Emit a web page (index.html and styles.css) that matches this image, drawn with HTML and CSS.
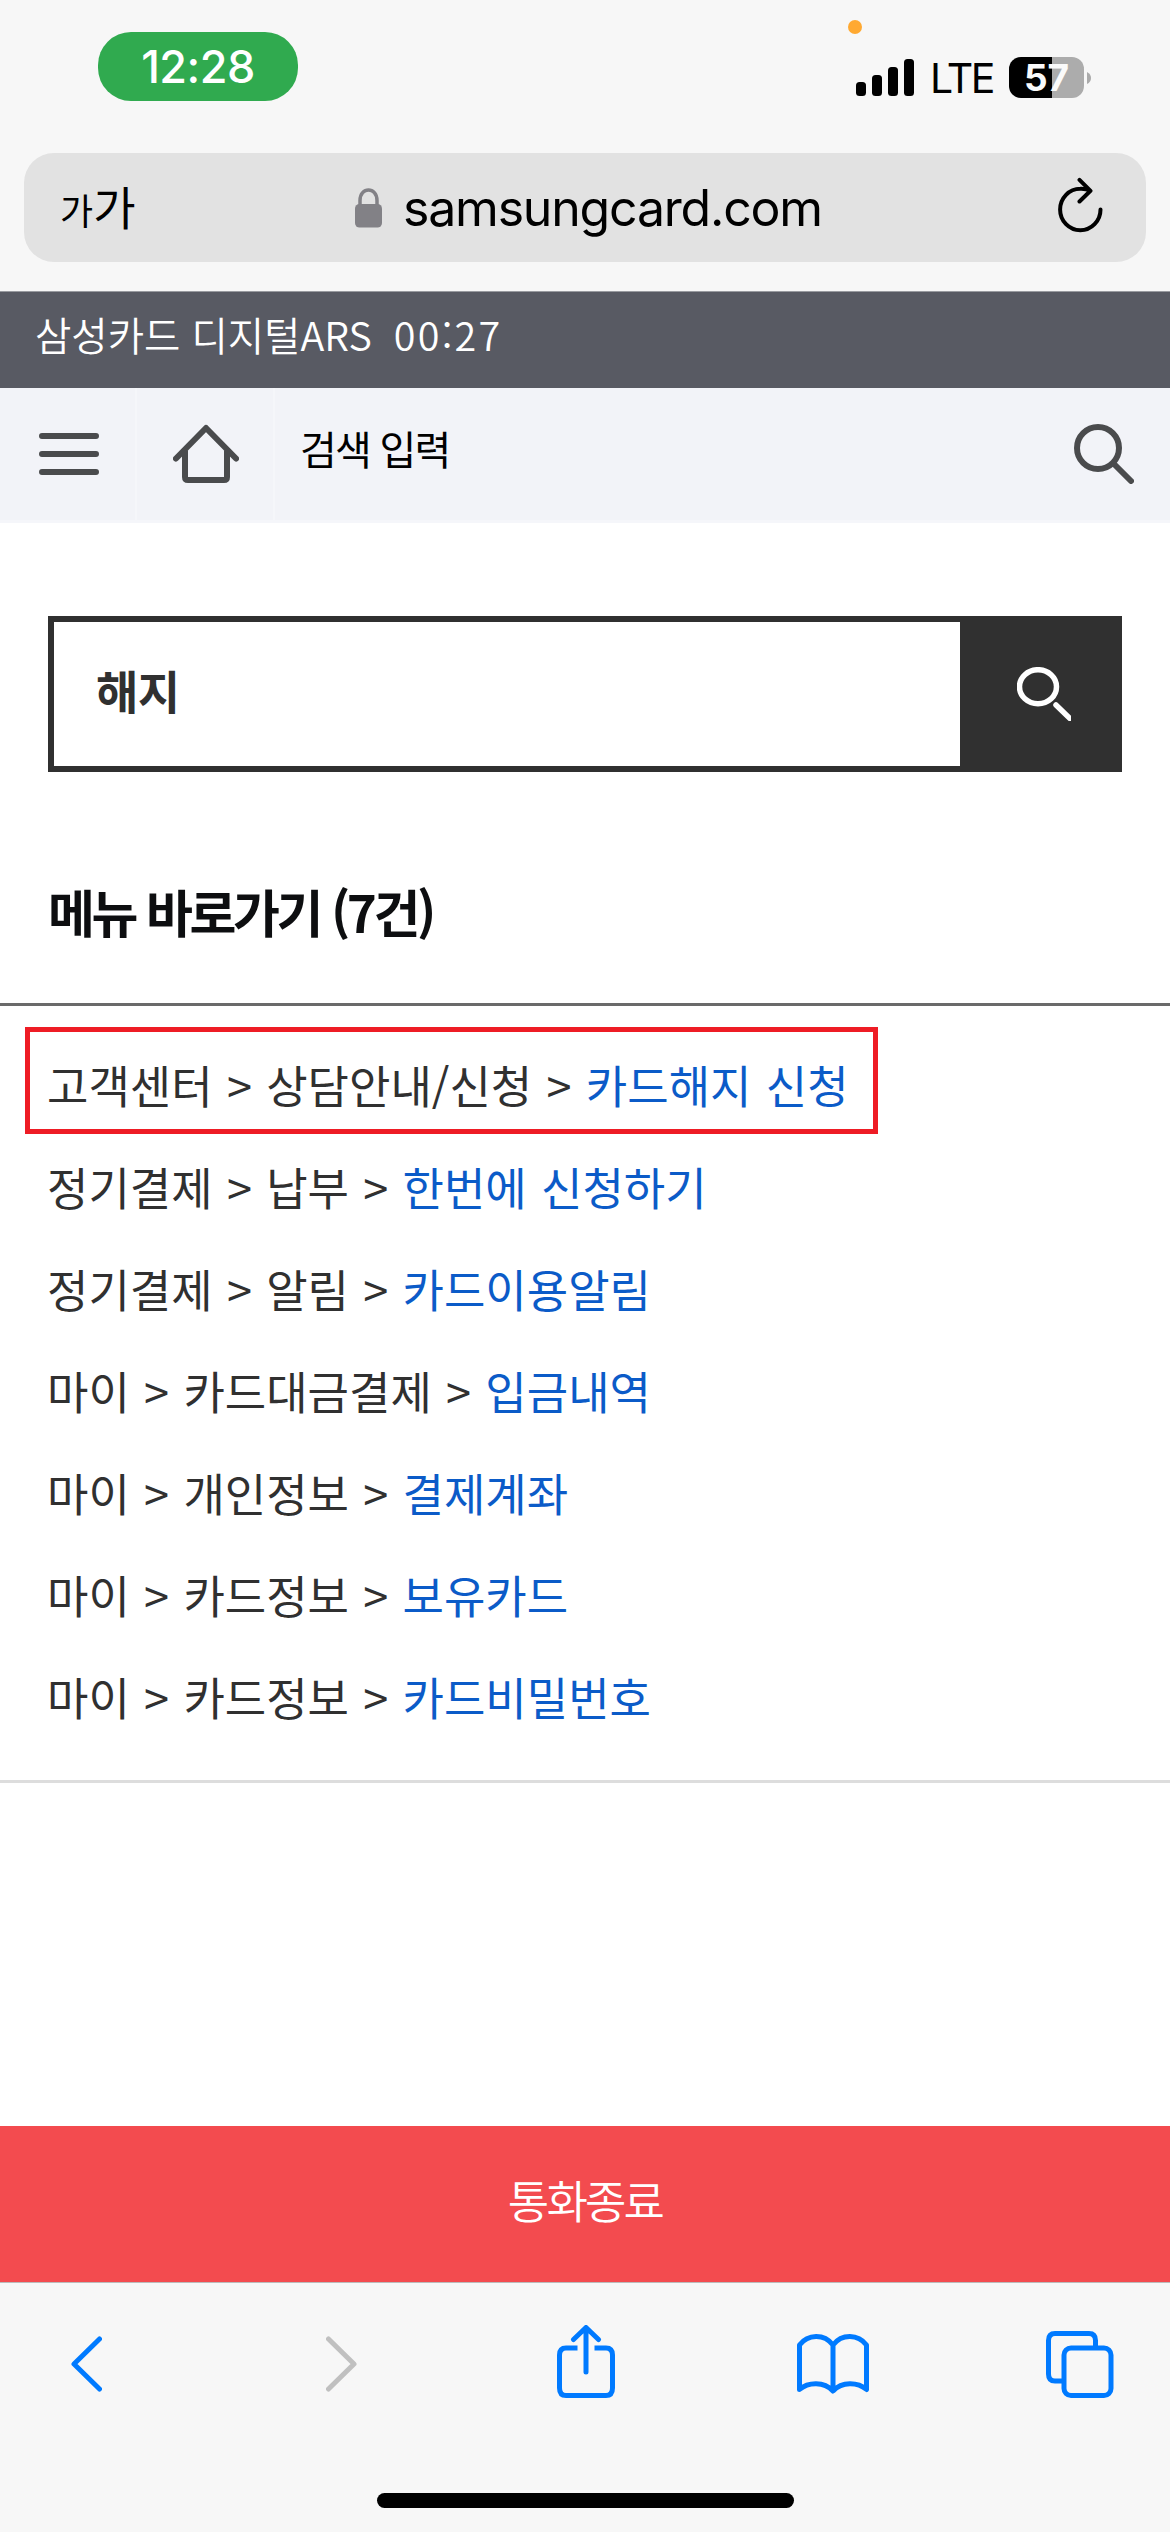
FILE: index.html
```html
<!DOCTYPE html>
<html lang="ko">
<head>
<meta charset="utf-8">
<title>삼성카드 디지털ARS</title>
<link rel="stylesheet" href="styles.css">
</head>
<body>
<div class="phone">
  <header class="status">
    <div class="clock">12:28</div>
    <div class="indicators">
      <i class="mic-dot"></i>
      <svg class="signal" width="58" height="37" viewBox="0 0 58 37"><rect y="23" width="10" height="14" rx="3.5"/><rect x="16" y="16" width="10" height="21" rx="3.5"/><rect x="32" y="8" width="10" height="29" rx="3.5"/><rect x="48" width="10" height="37" rx="3.5"/></svg>
      <span class="network">LTE</span>
      <div class="battery">57</div>
      <svg width="4" height="14" viewBox="0 0 4 14"><path d="M0 1Q4 3 4 7T0 13Z" fill="#aaa"/></svg>
    </div>
  </header>

  <div class="address">
    <div class="text-size"><span class="small">가</span><span>가</span></div>
    <div class="site">
      <svg width="27" height="40" viewBox="0 0 27 40"><path d="M5 18V12.500C5 -1.500 22 -1.500 22 12.500V18" fill="none" stroke="#828186" stroke-width="3.500"/><rect y="16" width="27" height="23.500" rx="4.500" fill="#828186"/></svg>
      <span>samsungcard.com</span>
    </div>
    <svg class="reload" width="46" height="56" viewBox="0 0 46 56" fill="none" stroke="#000" stroke-width="4" stroke-linecap="round" stroke-linejoin="round"><path d="M42.500 32.500A20.200 20.800 0 1 1 22.300 11.700Q28 11.500 32 13.500M21.500 2.800L32.500 13.800L21.500 24.500"/></svg>
  </div>

  <div class="call-bar">삼성카드 디지털ARS&nbsp; <span class="timer">00:27</span></div>

  <nav class="toolbar">
    <div class="cell"><svg width="60" height="42" viewBox="0 0 60 42" stroke="#4a4b4d" stroke-width="6" stroke-linecap="round"><path d="M3 3H57M3 21H57M3 39H57"/></svg></div>
    <div class="cell home"><svg width="66" height="60" viewBox="0 0 66 60" fill="none" stroke="#4a4b4d" stroke-width="6" stroke-linecap="round" stroke-linejoin="round"><path d="M3 34.500L33 4L63 34.500M12 27V53Q12 56 15 56H51Q54 56 54 53V27"/></svg></div>
    <div class="title">검색 입력</div>
    <svg class="find" width="60" height="60" viewBox="0 0 60 60" fill="none" stroke="#4a4b4d" stroke-width="6" stroke-linecap="round"><circle cx="24" cy="24" r="21"/><path d="M40 40L57 57"/></svg>
  </nav>

  <main>
    <div class="search">
      <div class="query">해지</div>
      <div class="go"><svg width="54" height="54" viewBox="0 0 54 54" fill="none" stroke="#fff" stroke-width="5.500" stroke-linecap="round"><ellipse cx="21" cy="19.700" rx="18.500" ry="17"/><path d="M39 38L53 51.500"/></svg></div>
    </div>
    <h1>메뉴 바로가기 (7건)</h1>
    <ul class="menus">
      <li class="marked">고객센터 &gt; 상담안내/신청 &gt; <a>카드해지 신청</a></li>
      <li>정기결제 &gt; 납부 &gt; <a>한번에 신청하기</a></li>
      <li>정기결제 &gt; 알림 &gt; <a>카드이용알림</a></li>
      <li>마이 &gt; 카드대금결제 &gt; <a>입금내역</a></li>
      <li>마이 &gt; 개인정보 &gt; <a>결제계좌</a></li>
      <li>마이 &gt; 카드정보 &gt; <a>보유카드</a></li>
      <li>마이 &gt; 카드정보 &gt; <a>카드비밀번호</a></li>
    </ul>
  </main>

  <div class="hangup">통화종료</div>

  <footer class="browser">
    <div class="actions">
      <svg width="31" height="56" viewBox="0 0 31 56" class="line"><path d="M28.500 3L3 28L28.500 53"/></svg>
      <svg width="31" height="56" viewBox="0 0 31 56" class="line off"><path d="M2.500 3L28 28L2.500 53"/></svg>
      <svg width="58" height="74" viewBox="0 0 58 74" class="line share"><path stroke-linecap="butt" d="M20.500 23H9Q2.500 23 2.500 30V63Q2.500 70.500 9 70.500H49Q55.500 70.500 55.500 63V30Q55.500 23 49 23H37.500"/><path d="M29 3V47M16.500 14.500L29 2.500L41.500 14.500"/></svg>
      <svg width="72" height="60" viewBox="0 0 72 60" class="line book"><path d="M36 11C27 -0.500 11 0 2.500 11V55.500C11 48 27 47 36 57C45 47 61 48 69.500 55.500V11C61 0 45 -0.500 36 11V56"/></svg>
      <svg width="68" height="67" viewBox="0 0 68 67" class="line tabs"><path stroke-linecap="butt" d="M49.500 15V9.500Q49.500 2.500 43 2.500H9Q2.500 2.500 2.500 9.500V43Q2.500 50 9 50H16"/><rect x="18" y="17" width="47" height="47.500" rx="7"/></svg>
    </div>
    <div class="home-indicator"></div>
  </footer>
</div>
</body>
</html>
```
FILE: styles.css
```css
*, *::after { box-sizing: border-box; }
body { margin: 0; background: #fff; }
svg { display: block; flex: none; }
.phone {
  width: 1170px; height: 2532px;
  display: flex; flex-direction: column;
  font-family: "Noto Sans CJK KR", sans-serif;
  overflow: hidden; white-space: nowrap;
}

.status {
  height: 153px; flex: none; background: #f7f7f7;
  display: flex; justify-content: space-between; align-items: flex-start;
  padding: 32px 79px 0 98px;
  font-family: Inter, sans-serif;
}
.clock {
  width: 200px; height: 69px; border-radius: 33px;
  background: #30aa4f; color: #fff;
  font-size: 45px; font-weight: 500; line-height: 70px; text-align: center;
  letter-spacing: -0.5px;
}
.indicators { position: relative; display: flex; align-items: center; margin-top: 25px; height: 41px; }
.mic-dot {
  position: absolute; left: -8px; top: -37px;
  width: 14px; height: 14px; border-radius: 7px; background: #ffa931;
}
.network { font-size: 41px; line-height: 41px; margin-left: 16px; width: 79px; padding-top: 2px; letter-spacing: -2.5px; }
.battery {
  width: 75px; height: 41px; border-radius: 12px; margin-right: 3px;
  background: linear-gradient(90deg, #000 43px, #acacac 43px);
  color: #fafafa; font-size: 37px; font-weight: 700; line-height: 41px; text-align: center;
}

.address {
  flex: none; height: 109px; background: #e2e2e2;
  border-radius: 30px; display: flex; align-items: center;
  margin: 0 24px; padding: 0 42px 0 36px;
  box-shadow: 0 0 0 60px #f7f7f7; clip-path: inset(0 -24px -29px -24px);
}
.text-size { width: 295px; font-size: 46px; line-height: 60px; padding-bottom: 2px; display: flex; align-items: baseline; }
.text-size .small { font-size: 36px; }
.site { display: flex; align-items: center; gap: 21px; font-family: Inter, sans-serif; font-size: 50px; letter-spacing: -1.200px; }
.reload { margin: 0 0 5px auto; }

.call-bar {
  flex: none; height: 97px; margin-top: 29px; padding: 0 35px 11px;
  background: #585a63; color: #fff; font-size: 39.500px; line-height: 84px;
  position: relative; border-top: 1px solid #999ba0; font-weight: 350;
}
.timer { letter-spacing: 2.200px; }
.toolbar { flex: none; height: 135px; display: flex; align-items: center; background: #f2f3f8; border-bottom: 3px solid #f5f6fa; }
.cell { width: 137px; height: 132px; padding: 0 0 0 39px; display: flex; align-items: center; border-right: 2px solid #f5f6fa; }
.home { width: 138px; padding: 0 0 0 36px; }
.title { font-size: 40px; letter-spacing: -1.800px; margin-left: 25px; padding-bottom: 12px; line-height: 50px; }
.find { margin-left: auto; margin-right: 36px; }

.search { margin: 93px 48px 0; height: 156px; border: 6px solid #303030; border-right: 0; display: flex; }
.query { flex: 1; padding-left: 42px; font-size: 46px; font-weight: 700; line-height: 134px; color: #303030; letter-spacing: -0.500px; }
.go { width: 162px; background: #303030; padding: 45px 0 0 57px; }
h1 { margin: 0; height: 231px; padding: 0 48px; font-size: 51px; line-height: 278px; letter-spacing: -3.400px; color: #0d0e10; font-weight: 700; }
.menus {
  margin: 0; list-style: none; height: 780px; padding: 28px 48px 0 47px;
  border-top: 3px solid #6a6a6a; border-bottom: 3px solid #ddd;
  font-size: 45px; line-height: 102px; word-spacing: 1.700px; color: #303030; font-weight: 400;
}
.menus a { color: #0b5bc8; }
.marked { position: relative; }
.marked::after { content: ""; position: absolute; left: -22px; top: -7px; width: 853px; height: 107px; border: 5px solid #ee1c25; }

.hangup {
  flex: none; margin-top: 343px; height: 156px; background: #f34b4f; color: #fff;
  font-size: 45px; line-height: 147px; letter-spacing: -2.800px; text-align: center; font-weight: 350;
}
.browser { flex: none; height: 250px; background: #f7f7f7; border-top: 1px solid #bbb; }
.actions { height: 163px; padding: 0 0 1px 71px; display: flex; align-items: center; }
.line { fill: none; stroke: #007aff; stroke-width: 5; stroke-linecap: round; stroke-linejoin: round; }
.off { stroke: #c0c0c0; margin-left: 224px; }
.share { margin: 0 0 4px 200px; }
.book { margin-left: 182px; }
.tabs { margin-left: 177px; }
.home-indicator { width: 417px; height: 15px; border-radius: 8px; background: #000; margin: 47px auto 0; }
```
